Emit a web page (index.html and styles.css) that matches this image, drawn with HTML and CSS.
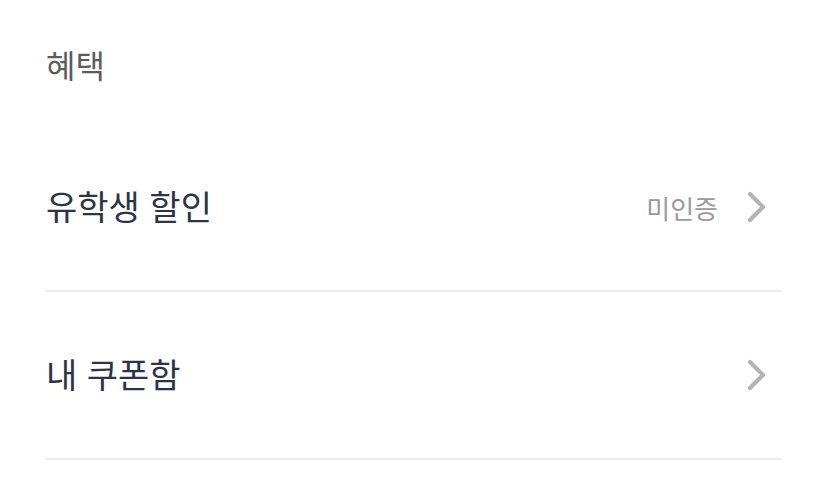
FILE: index.html
```html
<!DOCTYPE html>
<html lang="ko">
<head>
<meta charset="utf-8">
<link rel="stylesheet" href="styles.css">
</head>
<body>
<section class="section">
  <h2 class="section-title">혜택</h2>
  <ul class="menu">
    <li class="menu-item">
      <span class="label">유학생 할인</span>
      <span class="right">
        <span class="status">미인증</span>
        <svg class="chev" width="22" height="34" viewBox="0 0 22 34"><path d="M4 4 L17 17 L4 30" fill="none" stroke="#b4b4b4" stroke-width="4.2" stroke-linecap="round" stroke-linejoin="round"/></svg>
      </span>
    </li>
    <li class="menu-item">
      <span class="label">내 쿠폰함</span>
      <span class="right">
        <svg class="chev" width="22" height="34" viewBox="0 0 22 34"><path d="M4 4 L17 17 L4 30" fill="none" stroke="#b4b4b4" stroke-width="4.2" stroke-linecap="round" stroke-linejoin="round"/></svg>
      </span>
    </li>
  </ul>
</section>
</body>
</html>
```
FILE: styles.css
```css
html, body {
  margin: 0;
  padding: 0;
  background: #ffffff;
}
body {
  font-family: "Noto Sans CJK KR", "Noto Sans", sans-serif;
  width: 828px;
  height: 503px;
  overflow: hidden;
}
.section {
  padding: 0 46px;
}
.section-title {
  margin: 0;
  height: 124px;
  padding-top: 4px;
  box-sizing: border-box;
  font-size: 32px;
  font-weight: 400;
  color: #5c5c5c;
  display: flex;
  align-items: center;
}
.menu {
  list-style: none;
  margin: 0;
  padding: 0;
}
.menu-item {
  height: 166px;
  display: flex;
  align-items: center;
  justify-content: space-between;
  border-bottom: 2px solid #ebebeb;
}
.label {
  font-size: 34px;
  color: #2c3448;
  position: relative;
  top: -2px;
}
.right {
  display: flex;
  align-items: center;
  gap: 28px;
  padding-right: 14px;
}
.status {
  font-size: 26px;
  color: #9a9a9a;
}
.chev {
  display: block;
}
```
